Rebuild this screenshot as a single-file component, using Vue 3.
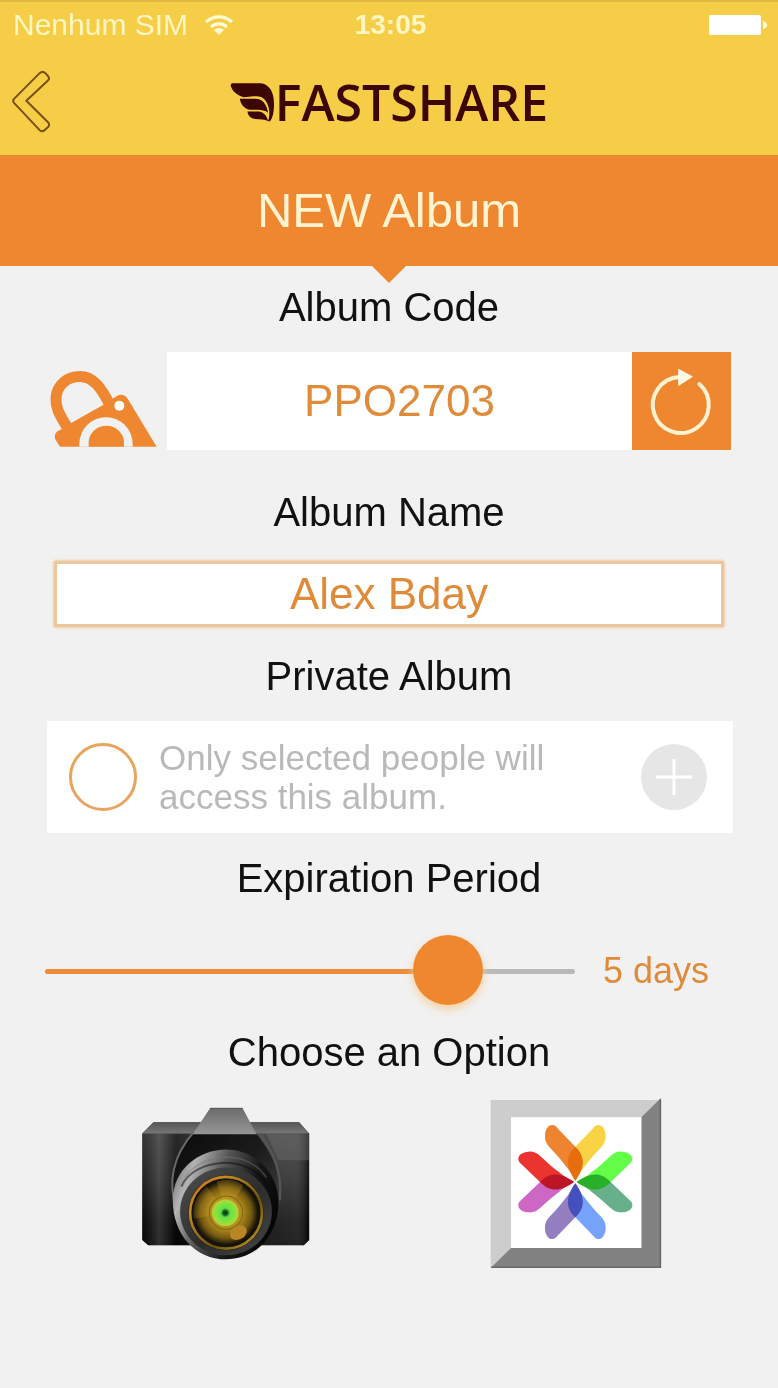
<script setup>
import { computed, ref } from 'vue'

const code = ref('PPO2703')
const name = ref('Alex Bday')
const isPrivate = ref(false)
const days = ref(5)
const minDays = 1
const maxDays = 6

const fill = computed(() => ((days.value - minDays) / (maxDays - minDays)) * 100 + '%')

const petals = [
  { color: '#ef8430', transform: '' },
  { color: '#64fe48', transform: 'rotate(90)' },
  { color: '#76a3fa', transform: 'rotate(180)' },
  { color: '#cc68c3', transform: 'rotate(270)' },
  { color: '#f8d445', transform: 'scale(-1 1)' },
  { color: '#68b08c', transform: 'rotate(90) scale(-1 1)' },
  { color: '#937fc0', transform: 'rotate(180) scale(-1 1)' },
  { color: '#eb3330', transform: 'rotate(270) scale(-1 1)' },
]

function regenerate() {
  code.value = 'PPO' + Math.floor(1000 + Math.random() * 9000)
}
</script>

<template>
  <div class="app">
    <header class="top">
      <div class="status">
        <span class="carrier">
          Nenhum SIM
          <svg class="wifi" viewBox="0 0 30 22" aria-hidden="true">
            <path d="M2 8a19 19 0 0 1 26 0M7 13a12 12 0 0 1 16 0" fill="none" stroke="#fff9d8" stroke-width="3.2" />
            <path d="M15 21l-5-5a7 7 0 0 1 10 0z" fill="#fff9d8" />
          </svg>
        </span>
        <time class="clock">13:05</time>
        <svg class="battery" viewBox="0 0 60 22" aria-label="Battery full">
          <rect x="1" y="1" width="52" height="20" rx="2" fill="#fff" />
          <path d="M55 7q4 1 4 4t-4 4z" fill="#fffbe2" />
        </svg>
      </div>
      <nav class="nav">
        <button class="back" type="button" aria-label="Back">
          <svg viewBox="34 210 120 188">
            <path
              d="M120 219L43 296Q38 302 43 308L120 390Q129 397 137 388L146 380Q151 373 145 366L80 302L144 242Q151 236 146 229L137 219Q129 211 120 219Z"
              fill="none" stroke="#775014" stroke-width="6" stroke-linejoin="round"
            />
          </svg>
        </button>
        <div class="logo">
          <svg class="wing" viewBox="36 68 136 122" aria-hidden="true">
            <path d="M44 71H128C156 73 169 100 169 132C169 155 166 175 157 186H151C157 168 157 145 145 126C136 111 122 109 100 111L78 113C58 108 42 93 38 78Q38 71 44 71Z" fill="#3b0604" />
            <path d="M66 118H112C132 118 146 131 151 160C142 151 126 150 112 151H95C80 149 67 134 66 118Z" fill="#3b0604" />
            <path d="M89 156H122C137 157 146 167 152 186C140 179 128 180 113 179C99 177 90 169 89 156Z" fill="#3b0604" />
          </svg>
          <span class="brand">FASTSHARE</span>
        </div>
      </nav>
    </header>

    <h1 class="title">NEW Album</h1>

    <main class="form">
      <label class="label" for="code">Album Code</label>
      <div class="code-row">
        <svg class="lock" viewBox="57 88 324 236" aria-hidden="true">
          <path d="M112 264C92 228 76 208 78 175C80 135 112 110 150 110C190 110 214 145 238 192" fill="none" stroke="#ef8730" stroke-width="33" />
          <path d="M90 321L75 297Q71 279 88 271Q102 266 122 250L222 194L262 168Q282 158 295 180L380 321Z" fill="#ef8730" />
          <circle cx="268" cy="198" r="15" fill="#fff" />
          <path d="M148 321V312A80 80 0 0 1 308 312V321Z" fill="#f1f1f1" />
          <path d="M176 321V308A53 50 0 0 1 282 308V321Z" fill="#ef8730" />
        </svg>
        <input id="code" class="code" type="text" readonly :value="code" />
        <button class="refresh" type="button" aria-label="New code" @click="regenerate">
          <svg viewBox="36 34 297 294">
            <path d="M238 130A84 84 0 1 1 178 109" fill="none" stroke="#fff2d0" stroke-width="12" stroke-linecap="round" />
            <path d="M176 86L217 108L176 134Z" fill="#fff8e4" stroke="#fff8e4" stroke-width="3" />
          </svg>
        </button>
      </div>

      <label class="label name-label" for="name">Album Name</label>
      <input id="name" v-model="name" class="name" type="text" />

      <h2 class="label private-label">Private Album</h2>
      <div class="private">
        <input id="private" v-model="isPrivate" class="radio" type="checkbox" />
        <label class="hint" for="private">Only selected people will access this album.</label>
        <button class="add" type="button" aria-label="Add people">
          <svg viewBox="0 0 40 40"><path d="M20 1V39M1 20H39" stroke="#fff" stroke-width="3" /></svg>
        </button>
      </div>

      <label class="label period-label" for="period">Expiration Period</label>
      <div class="period">
        <input
          id="period" v-model.number="days" class="slider" type="range"
          :min="minDays" :max="maxDays" :style="{ '--fill': fill }"
        />
        <output class="days" for="period">{{ days }} days</output>
      </div>

      <h2 class="label option-label">Choose an Option</h2>
    </main>

    <div class="options">
      <button class="option" type="button" aria-label="Camera">
        <svg class="camera" viewBox="66 46 504 460">
          <defs>
            <linearGradient id="topPlate" x1="0" y1="0" x2="0" y2="1">
              <stop offset="0" stop-color="#555" /><stop offset="1" stop-color="#777" />
            </linearGradient>
            <linearGradient id="body" x1="0" y1="0" x2="0" y2="1">
              <stop offset="0" stop-color="#484848" /><stop offset=".45" stop-color="#303030" />
              <stop offset=".8" stop-color="#101010" /><stop offset="1" stop-color="#090909" />
            </linearGradient>
            <linearGradient id="side" x1="0" y1="0" x2="1" y2="0">
              <stop offset="0" stop-color="#000" stop-opacity=".2" /><stop offset=".1" stop-color="#777" stop-opacity=".35" />
              <stop offset=".2" stop-color="#000" stop-opacity=".4" /><stop offset=".8" stop-color="#777" stop-opacity=".2" />
              <stop offset=".92" stop-color="#777" stop-opacity=".25" /><stop offset="1" stop-color="#000" stop-opacity=".6" />
            </linearGradient>
            <linearGradient id="prism" x1="0" y1="0" x2="0" y2="1">
              <stop offset="0" stop-color="#6c6c6c" /><stop offset="1" stop-color="#969696" />
            </linearGradient>
            <linearGradient id="hump" x1="0" y1="0" x2="1" y2="1">
              <stop offset="0" stop-color="#0a0a0a" /><stop offset=".5" stop-color="#1c1c1c" /><stop offset="1" stop-color="#4a4a4a" />
            </linearGradient>
            <linearGradient id="barrel" x1="0" y1=".2" x2="1" y2=".6">
              <stop offset="0" stop-color="#777" /><stop offset=".15" stop-color="#b4b4b4" />
              <stop offset=".4" stop-color="#555" /><stop offset=".7" stop-color="#161616" /><stop offset="1" stop-color="#050505" />
            </linearGradient>
            <linearGradient id="rim" x1="0" y1="0" x2="1" y2="1">
              <stop offset="0" stop-color="#505050" /><stop offset=".55" stop-color="#2c2c2c" /><stop offset="1" stop-color="#464646" />
            </linearGradient>
            <linearGradient id="gold" x1="0" y1="0" x2="1" y2="1">
              <stop offset="0" stop-color="#d86b19" /><stop offset=".25" stop-color="#c38b20" />
              <stop offset=".65" stop-color="#6b5410" /><stop offset="1" stop-color="#d0a52c" />
            </linearGradient>
            <radialGradient id="glass">
              <stop offset="0" stop-color="#d3a728" /><stop offset=".5" stop-color="#b48b1c" />
              <stop offset=".8" stop-color="#705810" /><stop offset="1" stop-color="#15120a" />
            </radialGradient>
            <radialGradient id="iris">
              <stop offset="0" stop-color="#07350d" /><stop offset=".18" stop-color="#176220" />
              <stop offset=".35" stop-color="#5fe04b" /><stop offset=".7" stop-color="#87e23c" /><stop offset="1" stop-color="#b5d43a" />
            </radialGradient>
          </defs>
          <path d="M66 126L100 92H538L568 126V446L552 462H84L66 446Z" fill="url(#body)" />
          <path d="M66 126H568V446L552 462H84L66 446Z" fill="url(#side)" />
          <path d="M66 126L100 92H538L568 126Z" fill="url(#topPlate)" />
          <path d="M440 128H568V206H475Z" fill="#777" opacity=".35" />
          <path d="M220 126H408C446 170 486 240 484 325L450 390L170 370C145 290 155 205 220 126Z" fill="url(#hump)" />
          <path d="M222 120C160 190 140 270 170 360" fill="none" stroke="#696969" stroke-width="6" />
          <path d="M418 125C468 190 486 250 480 325" fill="none" stroke="#555" stroke-width="7" />
          <path d="M270 50H368L410 128H218Z" fill="url(#prism)" />
          <path d="M270 50H368" stroke="#505050" stroke-width="3" />
          <path d="M318 174C397 174 470 232 476 326C477 430 410 504 318 504C226 504 158 430 158 326C158 232 239 174 318 174Z" fill="url(#barrel)" />
          <path d="M194 258C230 196 371 159 440 258" fill="none" stroke="#777" stroke-width="5" opacity=".4" />
          <path d="M184 285C220 200 389 181 444 285" fill="none" stroke="#090909" stroke-width="6" opacity=".5" />
          <ellipse cx="318" cy="360" rx="138" ry="132" fill="url(#rim)" />
          <circle cx="318" cy="364" r="113" fill="#17130a" />
          <circle cx="318" cy="364" r="108" fill="none" stroke="url(#gold)" stroke-width="8" />
          <circle cx="318" cy="364" r="96" fill="url(#glass)" />
          <path d="M318 364L222 382A98 98 0 0 1 260 285Z" fill="#e0b02c" opacity=".2" />
          <path d="M318 364L290 270Q335 256 370 282Z" fill="#d8aa29" opacity=".25" />
          <circle cx="318" cy="364" r="50" fill="none" stroke="#80701b" stroke-width="4" />
          <circle cx="316" cy="364" r="40" fill="url(#iris)" />
          <ellipse cx="355" cy="424" rx="27" ry="20" transform="rotate(-28 355 424)" fill="#b98625" />
        </svg>
      </button>
      <button class="option" type="button" aria-label="Gallery">
        <svg class="gallery" viewBox="32 26 516 510">
          <path d="M34 32H545V536H34Z" fill="#cdcdcd" />
          <path d="M545 26V536H34L95 476H486V84Z" fill="#828282" />
          <path d="M543 30V534H36" fill="none" stroke="#686868" stroke-width="5" />
          <path d="M95 84H486V476H95Z" fill="#fff" />
          <g transform="translate(288 278)">
            <path
              v-for="petal in petals" :key="petal.color" class="petal"
              :fill="petal.color" :transform="petal.transform"
              d="M0 -4C-8 -12 -12 -30 -29 -48C-42 -66 -58 -84 -76 -103C-88 -116 -92 -126 -91 -140C-90 -160 -80 -172 -68 -171C-62 -171 -58 -167 -52 -160L0 -106C32 -76 28 -42 0 -4Z"
            />
          </g>
        </svg>
      </button>
    </div>
  </div>
</template>

<style>
html {
  background: #f1f1f1;
}
</style>

<style scoped>
.app {
  min-height: 100vh;
  background: #f1f1f1;
  color: #111;
  font-family: "Liberation Sans", Arial, sans-serif;
}

button,
input {
  box-sizing: border-box;
  margin: 0;
  padding: 0;
  border: 0;
  border-radius: 0;
  font: inherit;
  color: inherit;
}

button {
  background: none;
  cursor: pointer;
}

svg {
  display: block;
}

.top {
  background: #f6cd46;
  border-top: 2px solid #dfb944;
}

.status {
  display: grid;
  grid-template-columns: 1fr auto 1fr;
  align-items: center;
  height: 46px;
  padding: 0 10px 0 13px;
  color: #fff6c4;
}

.carrier {
  display: flex;
  align-items: center;
  gap: 16px;
  font-size: 30px;
}

.wifi {
  width: 30px;
  height: 22px;
}

.clock {
  font-size: 28px;
  font-weight: bold;
}

.battery {
  justify-self: end;
  width: 60px;
  height: 22px;
}

.nav {
  display: grid;
  grid-template-columns: 1fr auto 1fr;
  align-items: center;
  height: 107px;
  padding: 0 11px;
}

.back {
  justify-self: start;
}

.back svg {
  width: 40px;
  height: 63px;
}

.logo {
  display: flex;
  align-items: center;
}

.wing {
  width: 45px;
  height: 41px;
  margin-top: 2px;
}

.brand {
  color: #3b0604;
  font-family: "Open Sans", "Noto Sans", sans-serif;
  font-size: 50px;
  font-weight: 600;
  line-height: 60px;
}

.title {
  position: relative;
  margin: 0;
  background: #ef8730;
  color: #fff4d2;
  font-size: 49px;
  font-weight: normal;
  line-height: 111px;
  text-align: center;
}

.title::after {
  content: "";
  position: absolute;
  top: 100%;
  left: 50%;
  border: 17px solid transparent;
  border-top-color: #ef8730;
  border-bottom: 0;
  transform: translateX(-50%);
}

.form {
  padding: 18px 45px 0;
}

.label {
  display: block;
  margin: 0;
  font-size: 40px;
  font-weight: normal;
  line-height: 46px;
  text-align: center;
}

.code-row {
  display: flex;
  align-items: flex-end;
  margin: 22px 2px 0 4px;
}

.lock {
  width: 108px;
  height: 79px;
  margin: 0 10px 2px 0;
}

.code {
  flex: 1;
  min-width: 0;
  height: 98px;
  background: #fff;
  color: #df8b39;
  font-size: 44px;
  text-align: center;
}

.refresh {
  background: #ef8730;
}

.refresh svg {
  width: 99px;
  height: 98px;
}

.name-label {
  margin-top: 39px;
}

.name {
  display: block;
  width: calc(100% - 18px);
  height: 66px;
  margin: 26px 9px 0;
  border: 3px solid #ebc79d;
  background: #fff;
  box-shadow: 0 0 3px #f3b36c;
  color: #df8b39;
  font-size: 44px;
  text-align: center;
}

.private-label {
  margin-top: 26px;
}

.private {
  display: flex;
  align-items: center;
  margin: 22px 0 0 2px;
  padding: 17px 26px 17px 22px;
  background: #fff;
}

.radio {
  flex: none;
  appearance: none;
  width: 68px;
  height: 68px;
  border: 3px solid #e7a55f;
  border-radius: 50%;
}

.radio:checked {
  background: #ef8730;
}

.hint {
  flex: 1;
  max-width: 400px;
  margin: 0 auto 0 22px;
  color: #b9b9b9;
  font-size: 35px;
  line-height: 39px;
}

.add {
  display: grid;
  flex: none;
  place-items: center;
  width: 66px;
  height: 66px;
  border-radius: 50%;
  background: #e6e6e6;
}

.add svg {
  width: 38px;
  height: 38px;
}

.period-label {
  margin-top: 22px;
}

.period {
  display: flex;
  align-items: center;
  gap: 28px;
  margin: 34px 24px 0 0;
}

.slider {
  flex: 1;
  min-width: 0;
  height: 72px;
  appearance: none;
  background: none;
}

.slider::-webkit-slider-runnable-track {
  height: 5px;
  border-radius: 3px;
  background: linear-gradient(to right, #ec8b3a var(--fill), #b9b9b9 var(--fill));
}

.slider::-webkit-slider-thumb {
  appearance: none;
  width: 70px;
  height: 70px;
  margin-top: -34px;
  border-radius: 50%;
  background: #ef8730;
  box-shadow: 0 4px 8px #f6cf9f;
}

.days {
  color: #df8b39;
  font-size: 36px;
}

.option-label {
  margin-top: 22px;
}

.options {
  display: grid;
  grid-template-columns: 1fr 1fr;
  align-items: center;
  justify-items: center;
  padding: 23px 27px 40px 51px;
}

.camera {
  width: 168px;
  height: 153px;
}

.gallery {
  width: 172px;
  height: 170px;
}

.petal {
  mix-blend-mode: multiply;
}
</style>
